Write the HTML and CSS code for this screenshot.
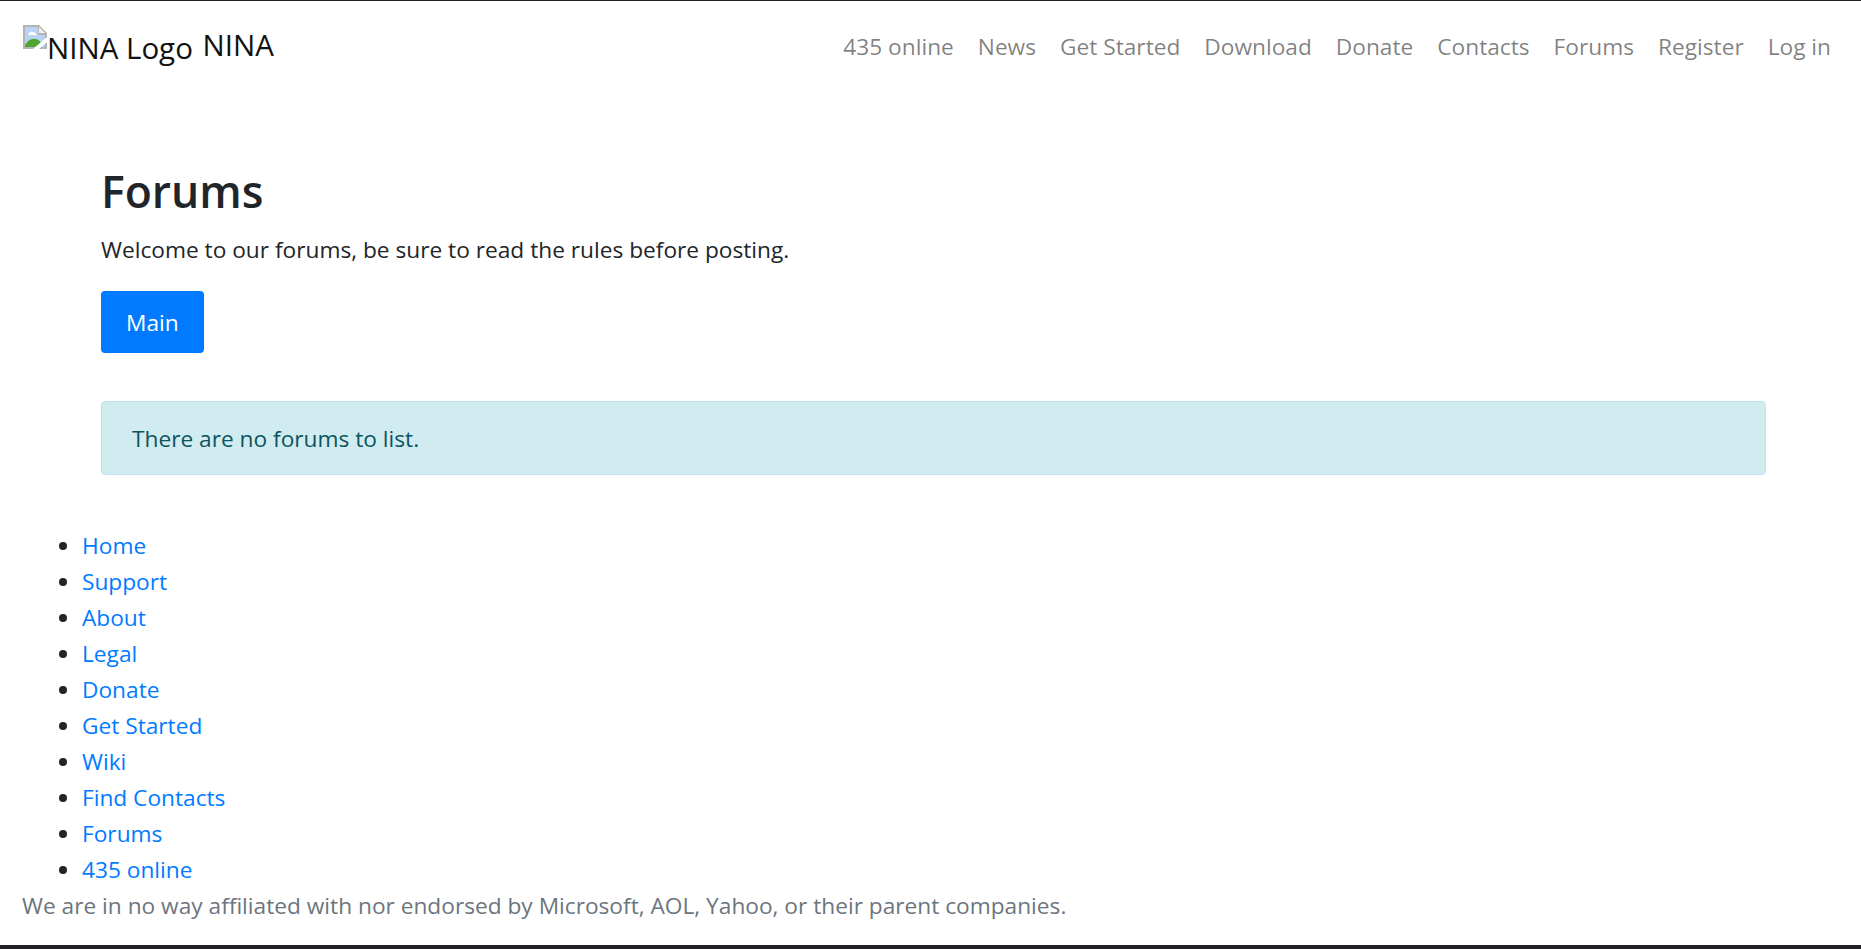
FILE: index.html
```html
<!DOCTYPE html>
<html lang="en">
<head>
<meta charset="utf-8">
<title>Forums</title>
<link rel="stylesheet" href="styles.css">
</head>
<body>
<nav class="navbar">
  <a class="brand" href="#"><svg class="broken-icon" width="24" height="24" viewBox="0 0 24 24"><path d="M0 0h16l8 8v16H0z" fill="#b4b4b4"/><path d="M2 2h13v8h7v12H2z" fill="#b9d3f3"/><path d="M16 2l6 6h-6z" fill="#f2f2f2"/><path d="M5 10c1-3 3-4 5-3 2 0 3 2 4 3z" fill="#fff"/><path d="M2 22v-2c3-5 7-7 10-6 3 0 5 2 6 4l-4 4z" fill="#4fa52f"/><path d="M24 12L10 24h6l8-7z" fill="#fff"/></svg><span class="alt">NINA Logo</span> NINA</a>
  <ul class="nav">
    <li><a href="#">435 online</a></li>
    <li><a href="#">News</a></li>
    <li><a href="#">Get Started</a></li>
    <li><a href="#">Download</a></li>
    <li><a href="#">Donate</a></li>
    <li><a href="#">Contacts</a></li>
    <li><a href="#">Forums</a></li>
    <li><a href="#">Register</a></li>
    <li><a href="#">Log in</a></li>
  </ul>
</nav>
<main class="container">
  <h1>Forums</h1>
  <p class="lead">Welcome to our forums, be sure to read the rules before posting.</p>
  <a class="btn" href="#">Main</a>
  <div class="alert">There are no forums to list.</div>
</main>
<footer class="footer">
  <ul class="links">
    <li><a href="#">Home</a></li>
    <li><a href="#">Support</a></li>
    <li><a href="#">About</a></li>
    <li><a href="#">Legal</a></li>
    <li><a href="#">Donate</a></li>
    <li><a href="#">Get Started</a></li>
    <li><a href="#">Wiki</a></li>
    <li><a href="#">Find Contacts</a></li>
    <li><a href="#">Forums</a></li>
    <li><a href="#">435 online</a></li>
  </ul>
  <div class="muted">We are in no way affiliated with nor endorsed by Microsoft, AOL, Yahoo, or their parent companies.</div>
</footer>
</body>
</html>
```
FILE: styles.css
```css
* { box-sizing: border-box; }
html, body { margin: 0; padding: 0; }
body {
  height: 949px;
  overflow: hidden;
  border-top: 1px solid #202124;
  border-bottom: 4px solid #202124;
  font-family: "Open Sans", "Noto Sans", sans-serif;
  font-size: 22.7px;
  line-height: 36px;
  color: #212529;
  background: #fff;
}
a { text-decoration: none; color: #007bff; }
.navbar {
  display: flex;
  justify-content: space-between;
  align-items: center;
  padding: 0 18px 0 23px;
  height: 92px;
}
.brand { color: #111; font-size: 29.5px; line-height: 45px; white-space: nowrap; margin-bottom: 6px; }
.broken-icon { vertical-align: 7px; }
.alt { display: inline-block; margin-right: 2px; transform: translateY(3px); }
.nav { display: flex; list-style: none; margin: 0; padding: 0; }
.nav a { display: block; padding: 8px 12px; color: rgba(0,0,0,.5); }
.container { padding: 71px 95px 0 101px; }
h1 { margin: 0 0 14px; font-size: 44.5px; line-height: 54px; font-weight: 600; }
.lead { margin: 0 0 23px; }
.btn {
  display: inline-block;
  padding: 14px 25px;
  height: 62px;
  color: #fff;
  background: #007bff;
  border-radius: 4px;
}
.alert {
  margin-top: 48px;
  padding: 19px 30px;
  height: 74px;
  color: #0c5460;
  background: #d1ecf1;
  border: 1px solid #bee5eb;
  border-radius: 4px;
}
.footer { padding: 53px 22px 0; }
.links { margin: 0; padding: 0 0 0 60px; }
.muted { color: #6c757d; }
```
